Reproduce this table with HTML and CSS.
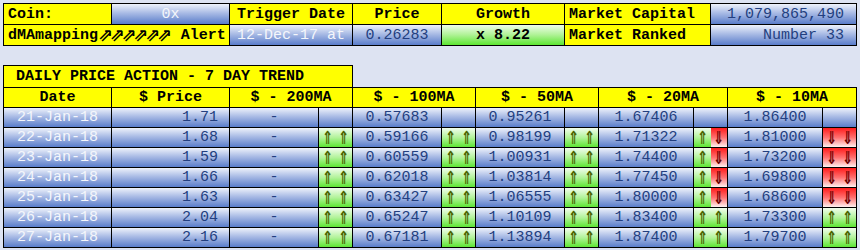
FILE: index.html
```html
<!DOCTYPE html>
<html>
<head>
<meta charset="utf-8">
<link rel="stylesheet" href="styles.css">
</head>
<body>
<div class="summary">
  <div class="c y left b">Coin:</div>
  <div class="c blue light">0x</div>
  <div class="c y b">Trigger Date</div>
  <div class="c y b">Price</div>
  <div class="c y b">Growth</div>
  <div class="c y left b">Market Capital</div>
  <div class="c blue navy right">1,079,865,490</div>

  <div class="c y left b span2">dMAmapping<span class="gl">⇗⇗⇗⇗⇗⇗</span>&nbsp;Alert</div>
  <div class="c blue light">12-Dec-17 at</div>
  <div class="c blue navy">0.26283</div>
  <div class="c green b">x 8.22</div>
  <div class="c y left b">Market Ranked</div>
  <div class="c blue navy right">Number 33</div>
</div>

<div class="title">DAILY PRICE ACTION - 7 DAY TREND</div>
<div class="trend">
  <div class="c y b">Date</div>
  <div class="c y b">$ Price</div>
  <div class="c y b span3">$ - 200MA</div>
  <div class="c y b span3">$ - 100MA</div>
  <div class="c y b span3">$ - 50MA</div>
  <div class="c y b span3">$ - 20MA</div>
  <div class="c y b span3">$ - 10MA</div>

  <div class="c blue light">21-Jan-18</div><div class="c blue navy price">1.71</div><div class="c blue navy">-</div><div class="c blue h1"></div><div class="c blue"></div>
  <div class="c blue navy">0.57683</div><div class="c blue h1"></div><div class="c blue"></div>
  <div class="c blue navy">0.95261</div><div class="c blue h1"></div><div class="c blue"></div>
  <div class="c blue navy">1.67406</div><div class="c blue h1"></div><div class="c blue"></div>
  <div class="c blue navy">1.86400</div><div class="c blue h1"></div><div class="c blue"></div>

  <div class="c blue light">22-Jan-18</div><div class="c blue navy price">1.68</div><div class="c blue navy">-</div><div class="c up h1"><i>⇑</i></div><div class="c up"><i>⇑</i></div>
  <div class="c blue navy">0.59166</div><div class="c up h1"><i>⇑</i></div><div class="c up"><i>⇑</i></div>
  <div class="c blue navy">0.98199</div><div class="c up h1"><i>⇑</i></div><div class="c up"><i>⇑</i></div>
  <div class="c blue navy">1.71322</div><div class="c up h1"><i>⇑</i></div><div class="c down"><i>⇓</i></div>
  <div class="c blue navy">1.81000</div><div class="c down h1"><i>⇓</i></div><div class="c down"><i>⇓</i></div>

  <div class="c blue light">23-Jan-18</div><div class="c blue navy price">1.59</div><div class="c blue navy">-</div><div class="c up h1"><i>⇑</i></div><div class="c up"><i>⇑</i></div>
  <div class="c blue navy">0.60559</div><div class="c up h1"><i>⇑</i></div><div class="c up"><i>⇑</i></div>
  <div class="c blue navy">1.00931</div><div class="c up h1"><i>⇑</i></div><div class="c up"><i>⇑</i></div>
  <div class="c blue navy">1.74400</div><div class="c up h1"><i>⇑</i></div><div class="c down"><i>⇓</i></div>
  <div class="c blue navy">1.73200</div><div class="c down h1"><i>⇓</i></div><div class="c down"><i>⇓</i></div>

  <div class="c blue light">24-Jan-18</div><div class="c blue navy price">1.66</div><div class="c blue navy">-</div><div class="c up h1"><i>⇑</i></div><div class="c up"><i>⇑</i></div>
  <div class="c blue navy">0.62018</div><div class="c up h1"><i>⇑</i></div><div class="c up"><i>⇑</i></div>
  <div class="c blue navy">1.03814</div><div class="c up h1"><i>⇑</i></div><div class="c up"><i>⇑</i></div>
  <div class="c blue navy">1.77450</div><div class="c up h1"><i>⇑</i></div><div class="c down"><i>⇓</i></div>
  <div class="c blue navy">1.69800</div><div class="c down h1"><i>⇓</i></div><div class="c down"><i>⇓</i></div>

  <div class="c blue light">25-Jan-18</div><div class="c blue navy price">1.63</div><div class="c blue navy">-</div><div class="c up h1"><i>⇑</i></div><div class="c up"><i>⇑</i></div>
  <div class="c blue navy">0.63427</div><div class="c up h1"><i>⇑</i></div><div class="c up"><i>⇑</i></div>
  <div class="c blue navy">1.06555</div><div class="c up h1"><i>⇑</i></div><div class="c up"><i>⇑</i></div>
  <div class="c blue navy">1.80000</div><div class="c up h1"><i>⇑</i></div><div class="c down"><i>⇓</i></div>
  <div class="c blue navy">1.68600</div><div class="c down h1"><i>⇓</i></div><div class="c down"><i>⇓</i></div>

  <div class="c blue light">26-Jan-18</div><div class="c blue navy price">2.04</div><div class="c blue navy">-</div><div class="c up h1"><i>⇑</i></div><div class="c up"><i>⇑</i></div>
  <div class="c blue navy">0.65247</div><div class="c up h1"><i>⇑</i></div><div class="c up"><i>⇑</i></div>
  <div class="c blue navy">1.10109</div><div class="c up h1"><i>⇑</i></div><div class="c up"><i>⇑</i></div>
  <div class="c blue navy">1.83400</div><div class="c up h1"><i>⇑</i></div><div class="c up"><i>⇑</i></div>
  <div class="c blue navy">1.73300</div><div class="c up h1"><i>⇑</i></div><div class="c up"><i>⇑</i></div>

  <div class="c blue light">27-Jan-18</div><div class="c blue navy price">2.16</div><div class="c blue navy">-</div><div class="c up h1"><i>⇑</i></div><div class="c up"><i>⇑</i></div>
  <div class="c blue navy">0.67181</div><div class="c up h1"><i>⇑</i></div><div class="c up"><i>⇑</i></div>
  <div class="c blue navy">1.13894</div><div class="c up h1"><i>⇑</i></div><div class="c up"><i>⇑</i></div>
  <div class="c blue navy">1.87400</div><div class="c up h1"><i>⇑</i></div><div class="c up"><i>⇑</i></div>
  <div class="c blue navy">1.79700</div><div class="c up h1"><i>⇑</i></div><div class="c up"><i>⇑</i></div>
</div>
</body>
</html>
```
FILE: styles.css
```css
html, body {
  margin: 0;
  padding: 0;
  background: #dde3f2;
}
body {
  padding: 3px;
  font-family: "Liberation Mono", "Courier New", monospace;
  font-size: 15px;
  color: #000;
}
.summary {
  display: grid;
  grid-template-columns: 108px 118px 123px 89px 123px 146px 146px;
  grid-auto-rows: 21px;
  width: 854px;
  box-sizing: border-box;
  border-top: 1px solid #000;
  border-left: 1px solid #000;
}
.trend {
  display: grid;
  grid-template-columns: 108px 118px 89px 17px 17px 89px 17px 17px 89px 17px 17px 95px 17px 17px 95px 17px 17px;
  grid-auto-rows: 20px;
  width: 854px;
  box-sizing: border-box;
  border-top: 1px solid #000;
  border-left: 1px solid #000;
}
.title {
  margin-top: 19px;
  width: 350px;
  height: 22px;
  box-sizing: border-box;
  border: 1px solid #000;
  border-bottom: none;
  background: #ffff00;
  font-weight: bold;
  padding-left: 12px;
  line-height: 21px;
  white-space: nowrap;
}
.c {
  box-sizing: border-box;
  border-right: 1px solid #000;
  border-bottom: 1px solid #000;
  display: flex;
  align-items: center;
  justify-content: center;
  white-space: nowrap;
  overflow: hidden;
}
.h1 { border-right: none; }
.span2 { grid-column: span 2; }
.span3 { grid-column: span 3; }
.left { justify-content: flex-start; padding-left: 4px; }
.right { justify-content: flex-end; padding-right: 12px; }
.price { justify-content: flex-end; padding-right: 11px; }
.b { font-weight: bold; }
.y { background: #ffff00; }
.blue { background: linear-gradient(to bottom, #eef2fb 0%, #a9bbe5 45%, #5a7dca 100%); }
.green { background: linear-gradient(to bottom, #effdea 0%, #aef294 50%, #5ce632 100%); }
.light { color: #f4f6fb; }
.navy { color: #233f80; }
.gl {
  font-family: "DejaVu Sans", sans-serif;
  font-size: 18px;
  font-weight: bold;
  line-height: 1;
  letter-spacing: -3.3px;
  margin-right: 3px;
}
.up, .down {
  font-family: "DejaVu Sans", sans-serif;
  font-size: 18px;
  font-weight: bold;
  line-height: 1;
}
.up i, .down i {
  font-style: normal;
  display: inline-block;
  transform: scaleX(0.75);
}
.up {
  background: linear-gradient(to bottom, #f2fdee 0%, #b2f39a 50%, #5ee634 100%);
  color: #4b6400;
}
.down {
  background: linear-gradient(to bottom, #ff1c1c 0%, #ff7070 50%, #fff0f0 100%);
  color: #6a0000;
}
```
